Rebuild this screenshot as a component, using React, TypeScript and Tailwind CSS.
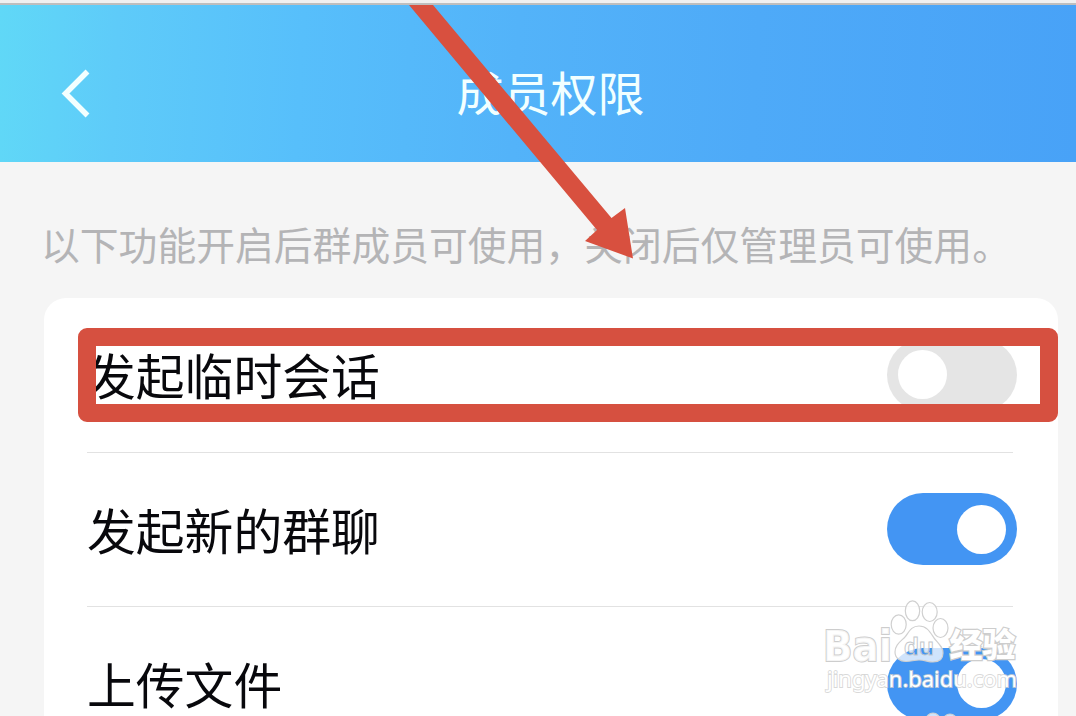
import { useState } from 'react'

const FEATURES = [
  { id: 'temp-chat', label: '发起临时会话', enabled: false },
  { id: 'new-group', label: '发起新的群聊', enabled: true },
  { id: 'upload', label: '上传文件', enabled: true },
]

function Toggle({ on, label, onChange }: { on: boolean; label: string; onChange: () => void }) {
  return (
    <button
      role="switch"
      aria-checked={on}
      aria-label={label}
      onClick={onChange}
      className={`flex h-[72px] w-[130px] shrink-0 items-center rounded-full px-[11px] ${
        on ? 'justify-end bg-[#4395f3]' : 'justify-start bg-[#e5e5e5]'
      }`}
    >
      <span className="size-[49px] rounded-full bg-white" />
    </button>
  )
}

function Watermark() {
  return (
    <svg
      className="pointer-events-none absolute left-[816px] top-[590px]"
      width="220"
      height="126"
      viewBox="0 0 220 126"
      fill="none"
    >
      <mask id="du-cut" maskUnits="userSpaceOnUse" x="0" y="0" width="220" height="126">
        <rect width="220" height="126" fill="white" />
        <text x="88" y="65" fontSize="23" fontWeight="700" fontFamily="Liberation Sans, sans-serif" textLength="30" lengthAdjust="spacingAndGlyphs" fill="black">du</text>
      </mask>

      {/* Paw */}
      <g fill="white" fillOpacity="0.75" stroke="#d0d0d0" strokeWidth="1.200">
        <ellipse cx="82.700" cy="34.500" rx="7.500" ry="9.700" />
        <ellipse cx="96.500" cy="20.800" rx="7.200" ry="9.900" />
        <ellipse cx="113.700" cy="22" rx="7.500" ry="9.500" />
        <ellipse cx="124.500" cy="38" rx="7.500" ry="9.500" />
        <path
          mask="url(#du-cut)"
          d="M103 36C111 36 114 42 118 48C123 54 127 57 127 63C127 69 123 72 117 72C112 72 109 70 103 70C98 70 95 71.500 90 71.500C84 71.500 79 68 79 62C79 55 84 52 89 47C93 42 95 36 103 36Z"
        />
        <ellipse cx="117" cy="130" rx="7" ry="7" />
        <ellipse cx="134" cy="131" rx="7" ry="7" />
      </g>
      <text x="88" y="65" fontSize="23" fontWeight="700" fontFamily="Liberation Sans, sans-serif" textLength="30" lengthAdjust="spacingAndGlyphs" stroke="#c4c8cc" strokeWidth="0.900">du</text>

      <g fill="white" fillOpacity="0.8" stroke="#cdcdcd" paintOrder="stroke">
        <text x="7" y="70.500" fontSize="43" fontWeight="700" fontFamily="DejaVu Sans, sans-serif" textLength="69" lengthAdjust="spacingAndGlyphs" strokeWidth="2">Bai</text>
        <text x="133.500" y="67" fontSize="32.500" fontWeight="900" fontFamily="Noto Sans CJK SC, sans-serif" textLength="66" lengthAdjust="spacingAndGlyphs" strokeWidth="2.400" fillOpacity="1">经验</text>
      </g>
      <text
        x="11"
        y="96.500"
        fontSize="21.500"
        fontFamily="Noto Sans, sans-serif"
        textLength="190"
        lengthAdjust="spacingAndGlyphs"
        fill="white"
        stroke="#cfcfcf"
        strokeOpacity="0.8"
        strokeWidth="1.800"
        paintOrder="stroke"
      >
        jingyan.baidu.com
      </text>
    </svg>
  )
}

export default function App() {
  const [features, setFeatures] = useState(FEATURES)

  const toggle = (id: string) =>
    setFeatures(prev => prev.map(f => (f.id === id ? { ...f, enabled: !f.enabled } : f)))

  return (
    <div className="relative flex h-[716px] w-[1076px] flex-col overflow-hidden bg-[#f5f5f5] font-['Liberation_Sans','Noto_Sans_CJK_SC',sans-serif]">
      <div className="h-[5px] shrink-0 border-b-2 border-[#bebebe] bg-[#f0f0f0]" />

      {/* Nav bar */}
      <header className="grid h-[157px] shrink-0 grid-cols-[1fr_auto_1fr] items-center bg-[linear-gradient(93deg,#60d8f7_0%,#5ecbf9_11%,#57bffb_28%,#53b3f9_48%,#4eaaf8_70%,#48a2f7_100%)] pl-[60px] pr-[35px] pt-[18px]">
        <button aria-label="返回" className="w-8">
          <svg width="32" height="50" viewBox="0 0 32 50" fill="none" stroke="#f2ffff" strokeWidth="5.500">
            <path d="M27.500 3.500L5.500 25.500L27.500 47.500" />
          </svg>
        </button>
        <h1 className="pt-1 text-[47px] leading-none text-[#f2ffff]">成员权限</h1>
      </header>

      <main className="flex flex-1 flex-col pl-[44px] pr-[18px]">
        <p className="-ml-[3px] flex h-[136px] shrink-0 items-center whitespace-nowrap pt-[35px] text-[38.800px] text-[#b4b4b6]">
          以下功能开启后群成员可使用，关闭后仅管理员可使用。
        </p>

        <section className="h-[480px] shrink-0 rounded-t-[22px] bg-white pl-[43px] pr-[41px]">
          {features.map((f, i) => (
            <div key={f.id}>
              {i > 0 && <div className="mr-1 h-px bg-[#e2e2e2]" />}
              <div className="flex h-[153.500px] items-center justify-between">
                <span className="pt-[8px] text-[48.800px] leading-none text-[#08080c]">{f.label}</span>
                <Toggle on={f.enabled} label={f.label} onChange={() => toggle(f.id)} />
              </div>
            </div>
          ))}
        </section>
      </main>

      {/* Highlight box and arrow */}
      <div className="pointer-events-none absolute left-[78px] top-[328px] h-[94px] w-[980px] rounded-[9px] border-[18px] border-[#d65040]" />
      <svg className="pointer-events-none absolute left-[400px] top-[5px]" width="240" height="260" viewBox="0 0 240 260">
        <path d="M9 0H33L211.500 213L225 203L233 253.500L185 236L197 225Z" fill="#d8503f" />
      </svg>

      <Watermark />
    </div>
  )
}
